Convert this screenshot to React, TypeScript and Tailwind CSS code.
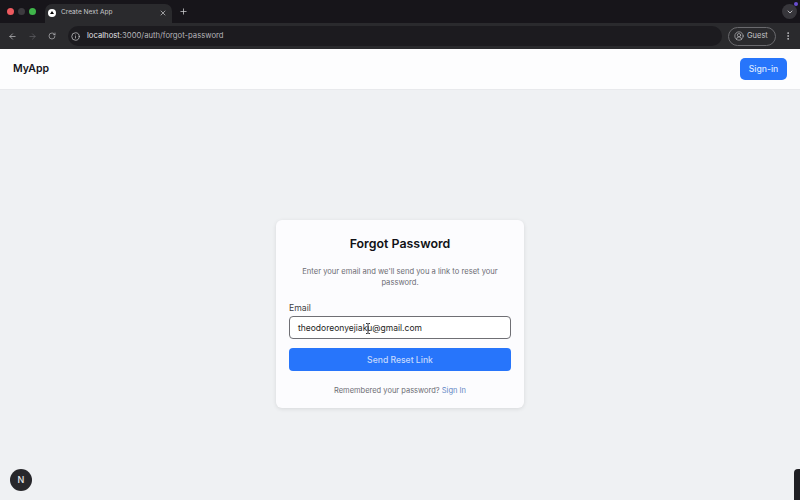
import { ArrowLeft, ArrowRight, RotateCw, Info, X, Plus, ChevronDown, CircleUserRound, EllipsisVertical } from "lucide-react";

export default function App() {
  return (
    <div className="relative flex h-[500px] w-[800px] flex-col overflow-hidden bg-[#eff1f3] font-['Inter',sans-serif]">
      {/* Tab strip */}
      <div className="flex h-[23px] items-center bg-[#17151a] pl-[7px] pr-[3px]">
        <div className="flex items-center gap-[4px]">
          <span className="h-[7px] w-[7px] rounded-full bg-[#ee5a5f]" />
          <span className="h-[7px] w-[7px] rounded-full bg-[#3c3a3e]" />
          <span className="h-[7px] w-[7px] rounded-full bg-[#3fb54a]" />
        </div>
        <div className="ml-[9px] flex h-[19px] w-[127px] items-center self-end rounded-t-[7px] bg-[#2a2a2d] pb-[2px] pl-[3px] pr-[5px]">
          <span className="flex h-[8px] w-[8px] items-center justify-center rounded-full bg-white">
            <span className="h-0 w-0 border-x-[2.5px] border-b-[3.5px] border-x-transparent border-b-black" />
          </span>
          <span className="ml-[5px] flex-1 text-[6.6px] text-[#c9c9cc]">Create Next App</span>
          <X className="h-[8px] w-[8px] text-[#d5d5d8]" strokeWidth={2} />
        </div>
        <Plus className="ml-[7px] h-[9px] w-[9px] text-[#cfcfd2]" strokeWidth={2} />
        <div className="relative ml-auto flex h-[15px] w-[15px] items-center justify-center rounded-full bg-[#37363b]">
          <ChevronDown className="h-[8px] w-[8px] text-[#d5d5d8]" strokeWidth={2.5} />
          <span className="absolute -right-[1px] -top-[2px] h-[4px] w-[4px] rounded-full bg-[#6a4fd0]" />
        </div>
      </div>
      {/* Toolbar */}
      <div className="flex h-[26px] items-center bg-[#2a2a2d] pl-[8px] pr-[7px]">
        <ArrowLeft className="h-[9px] w-[9px] text-[#b9b9bc]" strokeWidth={2} />
        <ArrowRight className="ml-[11px] h-[9px] w-[9px] text-[#5f5f63]" strokeWidth={2} />
        <RotateCw className="ml-[11px] h-[8px] w-[8px] text-[#b9b9bc]" strokeWidth={2} />
        <div className="ml-[12px] flex h-[20px] w-[654px] items-center rounded-full bg-[#1c1b1f] pl-[3px]">
          <Info className="h-[9px] w-[9px] text-[#c4c4c7]" strokeWidth={2} />
          <span className="ml-[7px] text-[7.7px] text-[#b4b4b8]">
            <span className="text-[#e2e2e5]">localhost</span>:3000/auth/forgot-password
          </span>
        </div>
        <div className="ml-[6px] flex h-[19px] w-[48px] items-center gap-[3px] rounded-full border border-[#6a6a6e] pl-[5px]">
          <CircleUserRound className="h-[10px] w-[10px] text-[#c9c9cc]" strokeWidth={1.5} />
          <span className="text-[7.5px] text-[#c4c4c7]">Guest</span>
        </div>
        <EllipsisVertical className="ml-[7px] h-[10px] w-[10px] text-[#c9c9cc]" strokeWidth={2} />
      </div>
      {/* App nav */}
      <header className="flex h-[41px] items-center justify-between border-b border-[#e8e9ec] bg-[#fdfdfe] pl-[13px] pr-[13px]">
        <span className="text-[10.5px] font-semibold text-[#14141a]">MyApp</span>
        <button className="h-[22px] w-[47px] rounded-[5px] bg-[#2775fb] text-[8.6px] font-medium text-[#dbe7ff]">Sign-in</button>
      </header>
      {/* Main */}
      <main className="flex flex-1 items-center justify-center pt-[38px]">
        <div className="flex w-[248px] flex-col rounded-[6px] bg-[#fcfcfe] px-[13px] pb-[12px] pt-[15px] shadow-[0_1px_4px_rgba(0,0,0,0.1)]">
          <h1 className="text-center text-[12.4px] font-semibold leading-[18px] text-[#111116]">Forgot Password</h1>
          <p className="mt-[13px] px-[4px] text-center text-[7.6px] leading-[11px] text-[#6c6c74]">
            Enter your email and we'll send you a link to reset your password.
          </p>
          <label className="mt-[14px] text-[8.7px] leading-[13px] text-[#3c3c42]">Email</label>
          <div className="relative mt-[1px] flex h-[23px] items-center rounded-[4px] border border-[#6f6f74] bg-white pl-[8px] pt-[1px] text-[8.5px] text-[#1c1c21]">
            theodoreonyejiaku@gmail.com
            <svg className="absolute left-[75px] top-[6px]" width="6" height="11" viewBox="0 0 6 11" fill="none" stroke="#333338" strokeWidth="1">
              <path d="M1 .5h1.2L3 1.2 3.8.5H5M3 1.2v8.6M1 10.5h1.2L3 9.8l.8.7H5" />
            </svg>
          </div>
          <button className="mt-[9px] h-[23px] rounded-[4px] bg-[#2775fb] pt-[1px] text-[8.6px] font-medium text-[#c5d9fd]">Send Reset Link</button>
          <p className="mt-[14px] text-center text-[7.5px] leading-[11px] text-[#6c6c74]">
            Remembered your password? <span className="text-[#5f86c4]">Sign In</span>
          </p>
        </div>
      </main>
      {/* Next badge */}
      <div className="absolute bottom-[9px] left-[10px] flex h-[22px] w-[22px] items-center justify-center rounded-full bg-[#27272b] text-[9px] font-medium text-[#e8e8ea]">N</div>
      <div className="absolute bottom-0 right-0 h-[31px] w-[6px] rounded-tl-[4px] bg-[#1f1f23]" />
    </div>
  );
}
